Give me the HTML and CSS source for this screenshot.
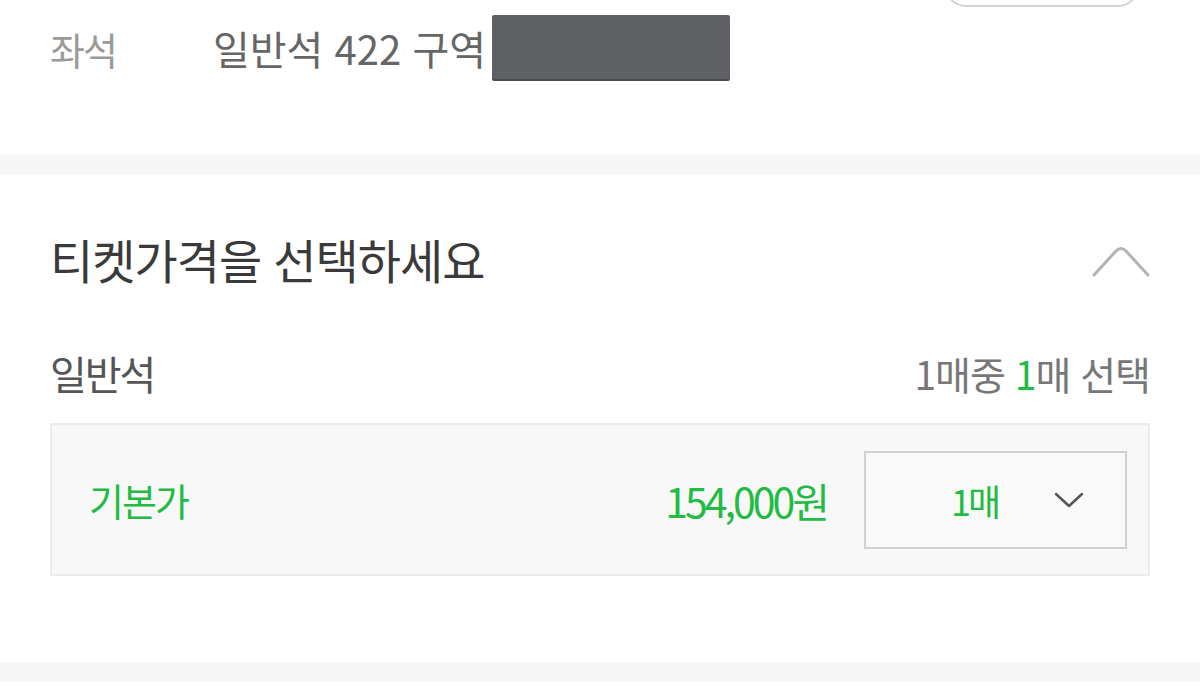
FILE: index.html
```html
<!DOCTYPE html>
<html lang="ko">
  <head>
    <meta charset="UTF-8" />
    <meta name="viewport" content="width=device-width, initial-scale=1.0" />
    <title>티켓 선택</title>
    <link rel="stylesheet" href="styles.css">
  </head>
  <body>
    <section class="seat-info">
      <div class="top-row">
        <button type="button" class="pill-btn" aria-label="좌석변경"></button>
      </div>
      <div class="seat-row">
        <span class="seat-label">좌석</span>
        <span class="seat-value">일반석 422 구역</span><span class="masked"></span>
      </div>
    </section>

    <div class="divider"></div>

    <section class="price-section">
      <div class="price-head">
        <h2>티켓가격을 선택하세요</h2>
        <svg class="chevron-up" width="58" height="32" viewBox="0 0 58 32">
          <path d="M2 30 L24 6 Q29 1 34 6 L56 30" fill="none" stroke="#b3b3b3" stroke-width="3" stroke-linecap="round" />
        </svg>
      </div>

      <div class="grade-row">
        <span class="grade-name">일반석</span>
        <span class="grade-count">1매중 <em>1</em>매 선택</span>
      </div>

      <div class="price-box">
        <span class="price-type">기본가</span>
        <span class="price-amount">154,000원</span>
        <div class="qty-select">
          <span class="qty-value">1매</span>
          <svg width="30" height="18" viewBox="0 0 30 18">
            <path d="M2 3 L15 15 L28 3" fill="none" stroke="#555" stroke-width="2.5" stroke-linecap="round" stroke-linejoin="round" />
          </svg>
        </div>
      </div>
    </section>

    <div class="divider"></div>
  </body>
</html>
```

FILE: styles.css
```css
body {
  margin: 0;
  background-color: #fff;
  font-family: "Noto Sans CJK KR", "Noto Sans", sans-serif;
  overflow: hidden;
}
.seat-info {
  height: 155px;
  padding: 0 50px;
  box-sizing: border-box;
}
.top-row {
  display: flex;
  justify-content: flex-end;
  padding-right: 10px;
}
.pill-btn {
  width: 196px;
  height: 60px;
  margin-top: -53px;
  border: 2px solid #d2d2d2;
  border-radius: 22px;
  background-color: #fff;
}
.seat-row {
  display: flex;
  align-items: center;
  height: 70px;
  margin-top: 6px;
}
.seat-label {
  width: 163px;
  font-size: 38px;
  letter-spacing: -2px;
  color: #9a9a9a;
}
.seat-value {
  font-size: 40px;
  letter-spacing: 0;
  color: #666;
}
.masked {
  display: inline-block;
  width: 238px;
  height: 64px;
  margin-left: 6px;
  background-color: #5f6063;
  border-bottom: 2px solid #4b4c50;
  border-radius: 2px;
}
.divider {
  height: 20px;
  background-color: #f7f7f7;
}
.price-section {
  padding: 53px 50px 86px;
}
.price-head {
  display: flex;
  justify-content: space-between;
  align-items: center;
  height: 60px;
}
.price-head h2 {
  margin: 0;
  font-size: 47px;
  font-weight: normal;
  letter-spacing: -1px;
  color: #3a3a3a;
}
.chevron-up {
  margin-top: 6px;
}
.grade-row {
  display: flex;
  justify-content: space-between;
  align-items: center;
  height: 50px;
  margin-top: 60px;
}
.grade-name {
  font-size: 40px;
  letter-spacing: -2px;
  color: #555;
}
.grade-count {
  font-size: 39px;
  letter-spacing: -1px;
  color: #777;
}
.grade-count em {
  font-style: normal;
  color: #22bb44;
}
.price-box {
  display: flex;
  align-items: center;
  height: 153px;
  margin-top: 25px;
  padding: 0 21px 0 37px;
  box-sizing: border-box;
  background-color: #f8f8f8;
  border: 2px solid #ececec;
}
.price-type {
  flex: 1;
  font-size: 38px;
  letter-spacing: -2px;
  color: #22bb44;
}
.price-amount {
  margin-right: 37px;
  font-size: 41px;
  letter-spacing: -3px;
  color: #22bb44;
}
.qty-select {
  display: flex;
  justify-content: space-between;
  align-items: center;
  width: 263px;
  height: 98px;
  padding: 0 41px 0 85px;
  box-sizing: border-box;
  background-color: #f9f9f9;
  border: 2px solid #d0d0d0;
}
.qty-value {
  font-size: 36px;
  letter-spacing: -3px;
  color: #22bb44;
}
```
